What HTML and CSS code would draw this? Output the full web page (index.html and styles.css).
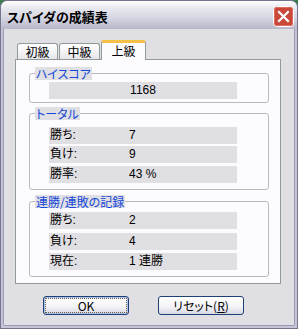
FILE: index.html
```html
<html><head><title>スパイダの成績表</title><link rel="stylesheet" href="styles.css"></head>
<body>
<div class="window">
  <div class="titlebar">
    <span class="title">スパイダの成績表</span>
    <span class="close"><svg width="21" height="21" viewBox="0 0 21 21"><rect x="0.5" y="0.5" width="20" height="20" rx="3" fill="#c9483a" stroke="#ffffff"/><rect x="1.5" y="1.5" width="18" height="18" rx="2" fill="none" stroke="#e88a7c" stroke-opacity=".6"/><path d="M6 6 L15 15 M15 6 L6 15" stroke="#ffffff" stroke-width="2.2" stroke-linecap="square"/></svg></span>
  </div>
  <div class="client">
    <div class="tabs">
      <div class="tab">初級</div>
      <div class="tab">中級</div>
      <div class="tab on">上級</div>
    </div>
    <div class="panel">
      <fieldset class="group g1">
        <legend>ハイスコア</legend>
        <div class="rows">
          <div class="row center">1168</div>
        </div>
      </fieldset>
      <fieldset class="group g2">
        <legend>トータル</legend>
        <div class="rows">
          <div class="row"><span class="k">勝ち:</span><span>7</span></div>
          <div class="row"><span class="k">負け:</span><span>9</span></div>
          <div class="row"><span class="k">勝率:</span><span>43 %</span></div>
        </div>
      </fieldset>
      <fieldset class="group g3">
        <legend>連勝/連敗の記録</legend>
        <div class="rows">
          <div class="row"><span class="k">勝ち:</span><span>2</span></div>
          <div class="row"><span class="k">負け:</span><span>4</span></div>
          <div class="row"><span class="k">現在:</span><span>1 連勝</span></div>
        </div>
      </fieldset>
    </div>
    <div class="buttons">
      <div class="btn default"><span class="focus">OK</span></div>
      <div class="btn">リセット(<u>R</u>)</div>
    </div>
  </div>
</div>
</body></html>
```
FILE: styles.css
```css
body { margin: 0; background-color: #3b7d4b; }
.window {
  width: 298px; height: 329px; box-sizing: border-box;
  border: 1px solid #75758f; border-radius: 7px 7px 0 0;
  background: #c5c4d6;
  font-family: "Noto Sans CJK JP", sans-serif; font-size: 12px;
  font-feature-settings: "palt";
  overflow: hidden;
}
.titlebar {
  height: 28px; display: flex; align-items: center; justify-content: space-between;
  background: linear-gradient(#ffffff, #e8e8f0 25%, #d6d6e3 60%, #b7b7ca);
  border-radius: 6px 6px 0 0;
}
.title { font-weight: bold; font-size: 13px; margin-left: 6px; margin-top: 3px; color: #000; }
.close { width: 21px; height: 21px; margin-right: 3px; margin-top: 3px; }
.close svg { display: block; }
.client {
  margin: 0 3px 3px 3px; height: 296px;
  background: #e0dfe3;
  box-shadow: -1px 0 #9a9ab2, 1px 0 #9a9ab2, 0 1px #9a9ab2;
  overflow: hidden;
}
.tabs { display: flex; align-items: flex-end; height: 19px; margin: 11px 0 0 13px; }
.tab {
  width: 41px; height: 16px; box-sizing: border-box; margin-right: 1px;
  border: 1px solid #919b9c; border-bottom: none; border-radius: 3px 3px 0 0;
  background: linear-gradient(#ffffff, #f3f3f6 60%, #e4e4ea);
  text-align: center; line-height: 15px;
}
.tab.on {
  width: 45px; height: 20px; margin-bottom: -1px; position: relative; z-index: 1;
  border-top: 3px solid #f5c048; background: #fcfcfe; line-height: 16px;
}
.panel {
  margin-left: 11px; width: 266px; height: 225px; box-sizing: border-box;
  border: 1px solid #919b9c; background: #fcfcfe;
  padding: 7px 0 6px 0;
}
.group {
  margin: 0 0 0 13px; width: 240px; min-width: 0; box-sizing: border-box;
  padding: 0; border: 1px solid #b9b9c3; border-radius: 3px;
}
.group legend {
  margin-left: 5px; padding: 0 1px; line-height: 13px; height: 13px;
  background: #e0dfe3; color: #1547d8;
}
.rows { margin: 0 31px 0 19px; display: flex; flex-direction: column; }
.row {
  height: 17px; line-height: 17px; background: #e0dfe3; display: flex; color: #000;
  font-family: "Liberation Sans", "Noto Sans CJK JP", sans-serif;
}
.row.center { justify-content: center; }
.row .k { width: 80px; padding-left: 1px; box-sizing: border-box; }
.g1 .rows { padding: 2px 0 3px 0; }
.g2 { margin-top: 4px; }
.g2 .rows { padding: 7px 0 6px 0; }
.g2 .row + .row { margin-top: 2px; }
.g2 .row:last-child { margin-top: 3px; }
.g3 { margin-top: 5px; }
.g3 .rows { padding: 4px 0 6px 0; }
.g3 .row + .row { margin-top: 4px; }
.g3 .row:last-child { margin-top: 3px; }
.buttons { display: flex; gap: 29px; margin: 12px 0 0 39px; }
.btn {
  width: 86px; height: 19px; box-sizing: border-box;
  border: 1px solid #1f3f77; border-radius: 3px;
  background: linear-gradient(#ffffff, #f4f4f7 55%, #d8d8e3);
  text-align: center; line-height: 17px; color: #000;
}
.btn.default { box-shadow: inset 0 0 0 1px #a8c0ec; position: relative; }
.btn .focus { display: block; margin: 2px; line-height: 13px; outline: 1px dotted #6b5a3a; }
```
